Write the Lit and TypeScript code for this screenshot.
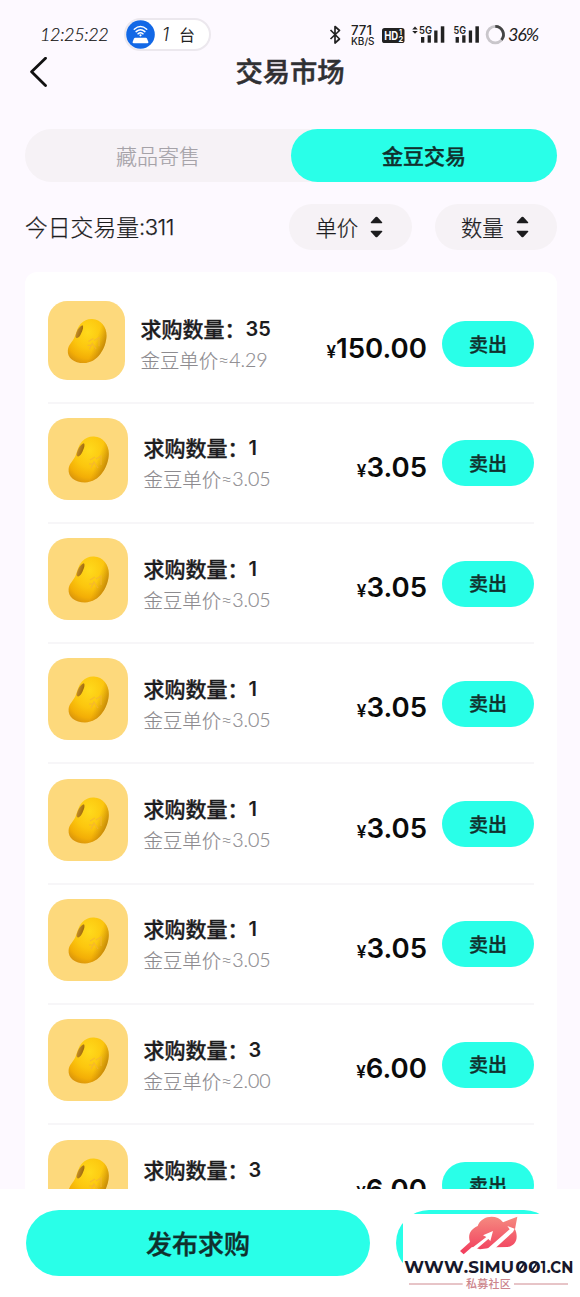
import { LitElement, html, svg, css, nothing } from "lit";
import { customElement, property } from "lit/decorators.js";
import { classMap } from "lit/directives/class-map.js";

interface Order {
  count: string;
  unit?: string;
  price: string;
}

const ORDERS: Order[] = [
  { count: "35", unit: "4.29", price: "150.00" },
  ...Array.from({ length: 5 }, () => ({ count: "1", unit: "3.05", price: "3.05" })),
  { count: "3", unit: "2.00", price: "6.00" },
  { count: "3", price: "6.00" },
];

@customElement("status-bar")
class StatusBar extends LitElement {
  static styles = css`
    :host { display: block; height: 50px; color: #222; }
    .bar { display: flex; align-items: center; height: 32px; padding: 18px 0 0 40px; }
    .time { width: 84px; font: italic 300 18px "Lato", sans-serif; letter-spacing: -0.35px; white-space: nowrap; color: #111; -webkit-text-stroke: 0.2px #111; }
    .pill { display: flex; align-items: center; box-sizing: border-box; width: 87px; height: 33px; border: 2px solid #ece8ee; border-radius: 17px; background: #fff; }
    .pill svg { flex: none; }
    .one { font: italic 300 18px "Inter", sans-serif; margin-left: 7px; width: 17px; }
    .unit { font: 400 16px "Noto Sans CJK SC", sans-serif; line-height: 20px; }
    .icons { margin-left: 117px; width: 180px; height: 26px; flex: none; }
    .pct { font: italic 400 18px "Lato", sans-serif; letter-spacing: -1.2px; white-space: nowrap; }
  `;
  private bars(x: number) {
    return svg`
      <rect x=${x} y="16" width="3.3" height="5.7"/>
      <rect x=${x + 6.6} y="14.3" width="3.3" height="7.4"/>
      <rect x=${x + 13.2} y="9.5" width="3.3" height="12.2"/>
      <rect x=${x + 19.8} y="5.3" width="3.5" height="16.4"/>`;
  }
  render() {
    return html`
      <div class="bar">
        <span class="time">12:25:22</span>
        <div class="pill">
          <svg width="29" height="29" viewBox="0 0 29 29">
            <circle cx="14.5" cy="14.5" r="14.3" fill="#1268e6"/>
            <g fill="none" stroke="#fff" stroke-width="1.5" stroke-linecap="round">
              <path d="M8.3 9.2 Q14.5 3.9 20.7 9.2"/>
              <path d="M10.1 11.6 Q14.5 7.9 18.9 11.6"/>
              <path d="M12 13.8 Q14.5 11.8 17 13.8"/>
            </g>
            <circle cx="14.5" cy="15.3" r="1.1" fill="#fff"/>
            <path d="M9.3 17.8 H19.7 Q20.7 17.8 21.1 18.8 L22.3 21.8 Q22.8 23.3 21.2 23.3 H7.8 Q6.2 23.3 6.7 21.8 L7.9 18.8 Q8.3 17.8 9.3 17.8Z" fill="#fff"/>
          </svg>
          <span class="one">1</span><span class="unit">台</span>
        </div>
        <svg class="icons" viewBox="0 0 180 26" fill="#222">
          <path d="M2.5 9 L11.5 18 L7 22 V5.5 L11.5 9.5 L2.5 18" fill="none" stroke="#222" stroke-width="1.7" stroke-linejoin="round"/>
          <g font-family="Inter, sans-serif" font-weight="500">
            <text x="23" y="13.8" font-size="12.4" textLength="21" lengthAdjust="spacingAndGlyphs">771</text>
            <text x="23" y="23.8" font-size="9.8" textLength="23.5" lengthAdjust="spacingAndGlyphs">KB/S</text>
          </g>
          <rect x="54" y="7" width="22.5" height="15" rx="2.6"/>
          <g font-family="Inter, sans-serif" font-weight="700" fill="#fff">
            <text x="56.2" y="18.8" font-size="11.5" textLength="14" lengthAdjust="spacingAndGlyphs">HD</text>
            <text x="71" y="14" font-size="7">1</text>
            <text x="70.6" y="21" font-size="7.4">2</text>
          </g>
          <path d="M84.2 8.4 L87 5.6 L89.8 8.4Z M84.2 9.9 L87 12.7 L89.8 9.9Z"/>
          <g font-family="Inter, sans-serif" font-weight="600" font-size="10.6">
            <text x="91" y="12.6" textLength="13" lengthAdjust="spacingAndGlyphs">5G</text>
            <text x="125.5" y="12.6" textLength="12.5" lengthAdjust="spacingAndGlyphs">5G</text>
          </g>
          ${this.bars(93)} ${this.bars(127.6)}
          <circle cx="167.3" cy="13.6" r="8.2" fill="none" stroke="#c9c6cb" stroke-width="2.8"/>
          <path d="M167.3 5.4 A8.2 8.2 0 0 1 173.5 18.9" fill="none" stroke="#444" stroke-width="2.8"/>
        </svg>
        <span class="pct">36%</span>
      </div>`;
  }
}

@customElement("bean-icon")
class BeanIcon extends LitElement {
  static styles = css`
    :host { display: block; }
    svg { display: block; width: 100%; height: 100%; }
  `;
  render() {
    const body = "M34 23.5 C37.5 20 41.5 18.3 46 18.6 C55 19 61 27 60.8 36 C60.5 48 52 64.2 37 64.4 C27 64.4 19.8 59 20.6 51 C21.2 45.5 25 43 27.2 38.5 C29.4 33.5 30.6 27 34 23.5Z";
    return html`
      <svg viewBox="0 0 80 82" preserveAspectRatio="none">
        <defs>
          <radialGradient id="body" cx="0.52" cy="0.3" r="0.75">
            <stop offset="0" stop-color="#ffda1c"/>
            <stop offset="0.5" stop-color="#fcc60e"/>
            <stop offset="0.8" stop-color="#f3ae06"/>
            <stop offset="1" stop-color="#d8930c"/>
          </radialGradient>
          <linearGradient id="edge" x1="0.3" y1="0.3" x2="1" y2="0.6">
            <stop offset="0.6" stop-color="#b97a08" stop-opacity="0"/>
            <stop offset="1" stop-color="#a26a08" stop-opacity="0.7"/>
          </linearGradient>
          <linearGradient id="dent" x1="0" y1="0" x2="1" y2="0.5">
            <stop offset="0" stop-color="#d8a03a"/>
            <stop offset="1" stop-color="#976407"/>
          </linearGradient>
        </defs>
        <rect width="80" height="82" rx="20" fill="#fdd97c"/>
        <path d=${body} fill="url(#body)"/>
        <path d=${body} fill="url(#edge)"/>
        <path d="M36 25.2 C32.4 26 29 32 28.6 36.6 C28.6 39.6 31.8 38.8 33.5 35.6 C35.3 32 37.4 27.4 36 25.2Z" fill="url(#dent)"/>
        <path d="M42 42 L47 39 M43 50 L46 44 L50 50 M48 41 L53 38 V47 M41 46 H46" fill="none" stroke="#f3b238" stroke-opacity="0.7" stroke-width="1.2"/>
      </svg>`;
  }
}

@customElement("order-row")
class OrderRow extends LitElement {
  @property({ attribute: false }) order!: Order;
  @property({ type: Boolean }) compact = false;
  static styles = css`
    :host { display: block; }
    .row { display: flex; align-items: center; box-sizing: border-box; height: 120.3px; padding: 14.3px 0 15px; border-bottom: 2px solid #f7f6f8; }
    .row.compact { height: 117px; padding: 14px 0 16px; }
    bean-icon { flex: none; align-self: flex-start; width: 80px; height: 82px; margin-right: 15.5px; }
    .compact bean-icon { width: 77px; height: 79px; }
    .info { flex: 1; white-space: nowrap; padding-top: 2px; }
    .title { font: 500 21px/32px "Noto Sans CJK SC", sans-serif; color: #1c1c1e; -webkit-text-stroke: 0.35px #1c1c1e; display: flex; }
    .num { font-family: "Inter", sans-serif; font-weight: 600; font-size: 20px; line-height: 34px; height: 32px; -webkit-text-stroke: 0; }
    .sub { height: 32px; font: 300 19.4px/32px "Noto Sans CJK SC", sans-serif; color: #8d8b8f; -webkit-text-stroke: 0.15px #8d8b8f; display: flex; }
    .val { font-family: "Lato", sans-serif; font-weight: 300; font-size: 19.6px; letter-spacing: -0.1px; }
    .price { font: 600 27.6px/36px "Inter", sans-serif; color: #0b0b0b; padding-top: 13px; margin-right: 15px; letter-spacing: 0; white-space: nowrap; }
    .yen { font-size: 17px; }
    .sell { flex: none; width: 92px; height: 46px; margin-top: 2px; border: 0; padding: 0 0 1px; border-radius: 23px; background: #29ffe8; color: #10302d; font: 500 19px/44px "Noto Sans CJK SC", sans-serif; -webkit-text-stroke: 0.35px #10302d; text-align: center; }
  `;
  render() {
    const o = this.order;
    return html`
      <div class=${classMap({ row: true, compact: this.compact })}>
        <bean-icon></bean-icon>
        <div class="info">
          <div class="title">求购数量：<span class="num">${o.count}</span></div>
          <div class="sub">${o.unit ? html`金豆单价<span class="val">≈${o.unit}</span>` : nothing}</div>
        </div>
        <div class="price"><span class="yen">¥</span>${o.price}</div>
        <button class="sell">卖出</button>
      </div>`;
  }
}

@customElement("site-badge")
class SiteBadge extends LitElement {
  static styles = css`
    :host { display: block; background: #fff; }
    svg { display: block; }
  `;
  render() {
    return html`
      <svg width="177" height="83" viewBox="69 192 531 249">
        <defs>
          <linearGradient id="red" x1="0" y1="0" x2="0" y2="1">
            <stop offset="0" stop-color="#f58a80"/>
            <stop offset="1" stop-color="#f23b5c"/>
          </linearGradient>
        </defs>
        <path d="M240 303 L270 276 C263 256 270 238 293 228 C303 197 350 190 369 217 L412 200 L405 238 C416 262 409 288 382 291 L347 292 L300 298 L276 291 L251 313 Z" fill="url(#red)"/>
        <path d="M276 294 L319 261 L309 256 L339 243 L331 273 L325 267 L287 299 Z M318 300 L389 238 L382 228 L404 236 L399 246 L344 296Z" fill="#fff"/>
        <text y="369" font-family="Montserrat, Inter, sans-serif" font-weight="700" font-size="50" fill="#17182b"><tspan x="73" textLength="178" lengthAdjust="spacingAndGlyphs">WWW</tspan><tspan x="251" textLength="151" lengthAdjust="spacingAndGlyphs">.SIMU</tspan><tspan x="406" textLength="76" lengthAdjust="spacingAndGlyphs">00</tspan><tspan x="482" textLength="16" lengthAdjust="spacingAndGlyphs">1</tspan><tspan x="500" textLength="80" lengthAdjust="spacingAndGlyphs">.CN</tspan></text>
        <path d="M416 364 L434 338 M454 364 L472 338" stroke="#17182b" stroke-width="5"/>
        <path d="M87 402 H248 M402 402 H564" stroke="#cf8a90" stroke-width="3"/>
        <text x="258" y="414" font-family="Noto Sans CJK SC, sans-serif" font-size="33" font-weight="500" fill="#cc858c" textLength="134">私募社区</text>
      </svg>`;
  }
}

@customElement("app-root")
class AppRoot extends LitElement {
  static styles = css`
    :host { display: block; }
    .screen { position: relative; display: flex; flex-direction: column; height: 1297px; overflow: hidden; background: #fdf9ff; font-family: "Noto Sans CJK SC", sans-serif; }
    .head { display: grid; grid-template-columns: 60px 1fr 60px; align-items: center; height: 44px; }
    .back { margin-left: 28px; }
    .name { text-align: center; font-size: 27.3px; font-weight: 500; color: #303033; -webkit-text-stroke: 0.5px #303033; line-height: 40px; padding-bottom: 5px; }
    .tabs { display: flex; flex: none; height: 52.5px; margin: 35px 23px 0 25px; border-radius: 27px; background: #f6f2f6; font-size: 21px; line-height: 53px; text-align: center; }
    .tab { flex: 1; color: #a5a2a8; font-weight: 300; -webkit-text-stroke: 0.2px #a5a2a8; }
    .tab.on { flex: none; width: 266px; border-radius: 27px; background: #29ffe8; color: #10302d; font-weight: 500; -webkit-text-stroke: 0.4px #10302d; }
    .filters { display: flex; flex: none; align-items: center; height: 46px; margin: 22px 23px 22px 25px; }
    .volume { flex: 1; display: flex; font-size: 22.8px; font-weight: 300; color: #1c1c1e; -webkit-text-stroke: 0.25px #1c1c1e; line-height: 40px; white-space: nowrap; }
    .digits { font-family: "Inter", sans-serif; font-size: 22px; letter-spacing: -0.5px; font-weight: 300; }
    .chip { display: flex; align-items: center; box-sizing: border-box; width: 122.5px; height: 46px; padding-left: 26.5px; margin-left: 23px; border-radius: 23px; background: #f6f2f6; font-size: 21.3px; font-weight: 300; color: #1c1c1e; -webkit-text-stroke: 0.25px #1c1c1e; line-height: 40px; }
    .chip svg { margin-left: 12px; }
    .card { flex: 1; min-height: 0; overflow: hidden; margin: 0 23px 0 25px; padding: 15px 23px 0; border-radius: 12px 12px 0 0; background: #fff; }
    .foot { display: flex; flex: none; gap: 26px; height: 66px; padding: 21px 23px 21px 26px; background: #fff; }
    .act { width: 344px; flex: none; border: 0; padding: 0 0 1px; border-radius: 33px; background: #29ffe8; color: #10302d; font: 500 26px/60px "Noto Sans CJK SC", sans-serif; -webkit-text-stroke: 0.4px #10302d; }
    .act.more { width: auto; flex: 1; }
    .badge { position: absolute; right: 0; bottom: 0; }
  `;
  private sorter() {
    return html`<svg width="13" height="22" viewBox="0 0 13 22" fill="#1c1c1e">
      <path d="M0.8 6.2 L5.6 1 Q6.5 0.3 7.4 1 L12.2 6.2 Q12.6 7.2 11.5 7.2 H1.5 Q0.4 7.2 0.8 6.2Z"/>
      <path d="M0.8 15.8 L5.6 21 Q6.5 21.7 7.4 21 L12.2 15.8 Q12.6 14.8 11.5 14.8 H1.5 Q0.4 14.8 0.8 15.8Z"/>
    </svg>`;
  }
  render() {
    return html`
      <div class="screen">
        <status-bar></status-bar>
        <div class="head">
          <svg class="back" width="22" height="32" viewBox="0 0 22 32" fill="none" stroke="#111" stroke-width="2.8" stroke-linecap="round" stroke-linejoin="round">
            <path d="M17.5 1.2 L3.6 14.8 L17.5 28.4"/>
          </svg>
          <div class="name">交易市场</div>
        </div>
        <div class="tabs">
          <div class="tab">藏品寄售</div>
          <div class="tab on">金豆交易</div>
        </div>
        <div class="filters">
          <div class="volume">今日交易量<span class="digits">:311</span></div>
          <div class="chip">单价${this.sorter()}</div>
          <div class="chip">数量${this.sorter()}</div>
        </div>
        <div class="card">
          ${ORDERS.map((o, i) => html`<order-row .order=${o} ?compact=${i === 0}></order-row>`)}
        </div>
        <div class="foot">
          <button class="act">发布求购</button>
          <button class="act more"></button>
        </div>
        <site-badge class="badge"></site-badge>
      </div>`;
  }
}
